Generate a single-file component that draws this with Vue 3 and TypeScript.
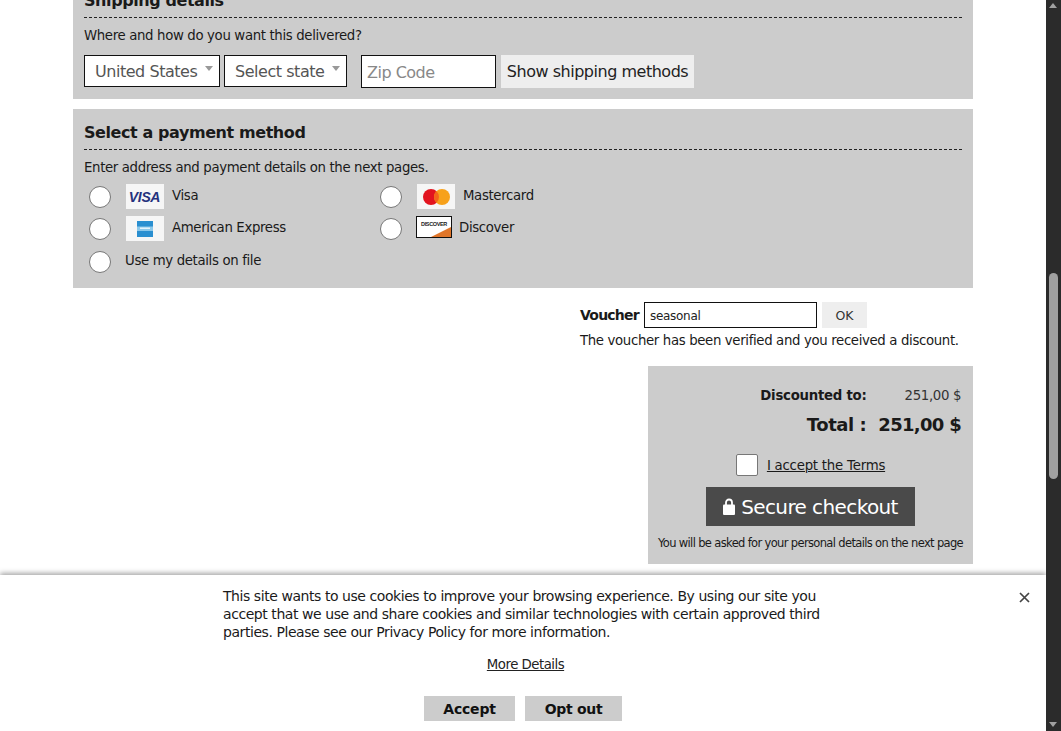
<script setup lang="ts">
const methodsLeft = ['Visa', 'American Express']
</script>

<template>
  <div class="window">
    <div class="page">
      <main class="content">
        <section class="panel shipping">
          <h2>Shipping details</h2>
          <p class="hint">Where and how do you want this delivered?</p>
          <div class="ship-row">
            <div class="fake-select country">United States<i class="caret"></i></div>
            <div class="fake-select state">Select state<i class="caret"></i></div>
            <input class="zip" placeholder="Zip Code" />
            <button class="ship-btn">Show shipping methods</button>
          </div>
        </section>

        <section class="panel payment">
          <h2>Select a payment method</h2>
          <p class="hint">Enter address and payment details on the next pages.</p>
          <div class="methods">
            <label class="method">
              <input type="radio" name="pay" />
              <span class="card">
                <svg width="38" height="25" viewBox="0 0 38 25"><text x="18.500" y="18" text-anchor="middle" class="visa">VISA</text></svg>
              </span>
              <span class="lbl">{{ methodsLeft[0] }}</span>
            </label>
            <label class="method">
              <input type="radio" name="pay" />
              <span class="card">
                <svg width="38" height="25" viewBox="0 0 38 25">
                  <circle cx="14" cy="13" r="8" fill="#e2141f" />
                  <circle cx="25" cy="13" r="8" fill="#f7a11b" />
                  <path d="M19.500 7.200a8 8 0 0 1 0 11.600a8 8 0 0 1 0-11.600z" fill="#f4641a" />
                </svg>
              </span>
              <span class="lbl">Mastercard</span>
            </label>
            <label class="method">
              <input type="radio" name="pay" />
              <span class="card">
                <svg width="38" height="25" viewBox="0 0 38 25">
                  <rect x="11" y="5" width="16" height="16" fill="#2a8fd0" />
                  <rect x="11" y="10.500" width="16" height="4.500" fill="#8cc8ea" />
                  <rect x="14" y="11.500" width="10" height="1.500" fill="#e4f3fb" />
                </svg>
              </span>
              <span class="lbl">{{ methodsLeft[1] }}</span>
            </label>
            <label class="method">
              <input type="radio" name="pay" />
              <span class="disc">
                <svg width="34" height="20" viewBox="0 0 34 20">
                  <path d="M14 20L34 10V20z" fill="#e0762a" />
                  <text x="17" y="9" text-anchor="middle" class="disc-t">DISCOVER</text>
                </svg>
              </span>
              <span class="lbl">Discover</span>
            </label>
            <label class="method file">
              <input type="radio" name="pay" />
              <span class="lbl">Use my details on file</span>
            </label>
          </div>
        </section>

        <section class="voucher">
          <div class="v-row">
            <b>Voucher</b>
            <input class="v-input" value="seasonal" />
            <button class="v-ok">OK</button>
          </div>
          <p class="v-msg">The voucher has been verified and you received a discount.</p>
        </section>

        <section class="summary">
          <div class="sum-row disc-row"><b>Discounted to:</b><span>251,00 $</span></div>
          <div class="sum-row total-row"><b>Total :</b><b>251,00 $</b></div>
          <label class="terms">
            <input type="checkbox" />
            <u>I accept the Terms</u>
          </label>
          <button class="checkout">
            <svg width="12" height="17" viewBox="0 0 12 17">
              <path d="M3 7V4.500a3 3 0 0 1 6 0V7" fill="none" stroke="#fff" stroke-width="1.800" />
              <rect x="0" y="6.500" width="12" height="10.500" rx="1" fill="#fff" />
            </svg>
            Secure checkout
          </button>
          <p class="fine">You will be asked for your personal details on the next page</p>
        </section>
      </main>

      <aside class="cookie">
        <button class="close" aria-label="Close">
          <svg width="11" height="11" viewBox="0 0 11 11"><path d="M1 1l9 9M10 1l-9 9" stroke="#444" stroke-width="1.700" /></svg>
        </button>
        <p class="cookie-text">This site wants to use cookies to improve your browsing experience. By using our site you accept that we use and share cookies and similar technologies with certain approved third parties. Please see our Privacy Policy for more information.</p>
        <a class="more">More Details</a>
        <div class="cookie-btns">
          <button class="accept">Accept</button>
          <button class="opt">Opt out</button>
        </div>
      </aside>
    </div>

    <div class="scrollbar">
      <i class="arrow up"></i>
      <i class="thumb"></i>
      <i class="arrow down"></i>
    </div>
  </div>
</template>

<style>
html, body { margin: 0; overflow: hidden; background: #fff; }
</style>

<style scoped>
* { box-sizing: border-box; }
.window {
  display: flex;
  width: 1061px;
  height: 731px;
  overflow: hidden;
  font-family: "DejaVu Sans", sans-serif;
  font-size: 14px;
  color: #1a1a1a;
}
.page { position: relative; flex: 1; min-width: 0; background: #fff; overflow: hidden; }
.content { width: 900px; margin: -23px auto 0; display: flex; flex-direction: column; }
.panel { background: #ccc; padding: 11px; }
h2 { margin: 0; font-size: 16px; line-height: 26px; border-bottom: 1px dashed #222; height: 30px; letter-spacing: -0.42px; }
.hint { margin: 8px 0 0; line-height: 20px; font-size: 13.300px; letter-spacing: -0.35px; }
.shipping { height: 122px; margin-bottom: 10px; }
.ship-row { display: flex; align-items: flex-start; margin-top: 9px; }
.fake-select {
  position: relative;
  height: 32px;
  background: #fff;
  border: 1px solid #111;
  color: #555;
  font-size: 16px;
  line-height: 31px;
  padding-left: 10px;
  letter-spacing: -0.46px;
}
.country { width: 136px; margin-right: 4px; }
.state { width: 123px; margin-right: 14px; }
.caret { position: absolute; right: 6px; top: 10px; border: 4px solid transparent; border-top: 5px solid #999; border-bottom: 0; }
.zip {
  width: 135px;
  height: 33px;
  border: 1px solid #111;
  font: 16px "DejaVu Sans", sans-serif;
  letter-spacing: -0.5px;
  padding: 2px 5px 0;
  margin-right: 5px;
  background: #fff;
}
.zip::placeholder { color: #888; }
.ship-btn {
  width: 193px;
  height: 33px;
  border: 0;
  padding: 0;
  background: #eee;
  color: #222;
  font: 16px "DejaVu Sans", sans-serif;
  letter-spacing: -0.48px;
}
.payment { height: 179px; }
.methods { display: grid; grid-template-columns: 291px 1fr; grid-auto-rows: 32px; margin: 6px 0 0 5px; }
.method { display: flex; align-items: flex-start; font-size: 13.300px; letter-spacing: -0.35px; }
input[type="radio"] {
  appearance: none;
  width: 22px;
  height: 22px;
  margin: 2px 15px 0 0;
  border: 1px solid #777;
  border-radius: 50%;
  background: #fff;
  flex: none;
}
.card { width: 38px; height: 25px; margin: 0 8px 0 0; background: #f6f6f6; display: block; flex: none; }
.card svg { display: block; }
.visa { font: italic 700 14px "Liberation Sans", sans-serif; fill: #25327d; }
.lbl { line-height: 20px; margin-top: 2px; }
.disc { width: 36px; height: 22px; margin-left: -1px; border: 1px solid #111; background: #fff; margin-right: 7px; display: block; flex: none; }
.disc svg { display: block; }
.disc-t { font: 700 5.500px "Liberation Sans", sans-serif; fill: #222; }
.file { grid-column: 1 / -1; }
.file input[type="radio"] { margin: 3px 14px 0 0; }
.file .lbl { margin-top: 3px; }
.voucher { margin: 14px 0 0 507px; }
.v-row { display: flex; align-items: center; height: 26px; }
.v-row b { font-size: 14px; width: 64px; letter-spacing: -0.77px; }
.v-input { width: 173px; height: 26px; border: 1px solid #111; padding: 1px 5px 0; font: 12px "DejaVu Sans", sans-serif; letter-spacing: -0.3px; color: #222; background: #fff; }
.v-ok { width: 45px; height: 26px; margin-left: 5px; border: 0; background: #eee; color: #333; font: 12.500px "DejaVu Sans", sans-serif; }
.v-msg { margin: 3px 0 0; line-height: 20px; font-size: 13.300px; letter-spacing: -0.35px; white-space: nowrap; }
.summary {
  align-self: flex-end;
  width: 325px;
  height: 198px;
  margin-top: 15px;
  background: #ccc;
  display: flex;
  flex-direction: column;
  align-items: center;
  padding-top: 20px;
}
.sum-row { align-self: stretch; display: flex; justify-content: flex-end; padding-right: 12px; }
.disc-row { font-size: 13.300px; line-height: 20px; }
.disc-row b { margin-right: 38px; letter-spacing: -0.25px; }
.disc-row span { color: #333; letter-spacing: -0.35px; }
.total-row { font-size: 18px; line-height: 24px; margin-top: 7px; letter-spacing: -0.7px; }
.total-row b:first-child { margin-right: 12px; letter-spacing: -0.45px; }
.terms { display: flex; align-items: center; margin-top: 17px; font-size: 13.300px; letter-spacing: -0.22px; }
.terms input { appearance: none; width: 22px; height: 22px; margin: 0 9px 0 0; background: #fff; border: 1px solid #777; border-radius: 2px; }
.checkout {
  width: 209px;
  height: 39px;
  margin-top: 11px;
  border: 0;
  background: #4a4a4a;
  color: #fff;
  font: 20px "DejaVu Sans", sans-serif;
  letter-spacing: -0.6px;
  display: flex;
  align-items: center;
  justify-content: center;
  gap: 6px;
  padding: 0;
}
.fine { margin: 9px 0 0; font-size: 11.500px; line-height: 16px; letter-spacing: -0.65px; white-space: nowrap; }
.cookie {
  position: absolute;
  left: 0;
  right: 0;
  bottom: 0;
  height: 156px;
  background: #fff;
  box-shadow: 0 -2px 5px rgba(0, 0, 0, 0.35);
  display: flex;
  flex-direction: column;
  align-items: center;
  padding-top: 12px;
}
.cookie-text { margin: 0; width: 600px; font-size: 14px; line-height: 18px; letter-spacing: -0.44px; }
.more { margin-top: 15px; margin-left: 5px; font-size: 13.300px; line-height: 18px; text-decoration: underline; letter-spacing: -0.5px; color: #222; }
.cookie-btns { display: flex; gap: 10px; margin-top: 22px; }
.cookie-btns button { height: 25px; border: 0; padding: 0; background: #ccc; color: #111; font: 700 14px "DejaVu Sans", sans-serif; }
.accept { width: 91px; letter-spacing: -0.2px; }
.opt { width: 97px; letter-spacing: -0.3px; }
.close { position: absolute; right: 16px; top: 17px; width: 11px; height: 11px; padding: 0; border: 0; background: none; }
.close svg { display: block; }
.scrollbar {
  width: 15px;
  flex: none;
  background: #2b2b2b;
  position: relative;
}
.thumb { position: absolute; left: 3px; top: 273px; width: 9px; height: 206px; border-radius: 5px; background: #a0a0a0; }
.arrow { position: absolute; left: 3px; border-left: 4.500px solid transparent; border-right: 4.500px solid transparent; }
.up { top: 3px; border-bottom: 5px solid #a0a0a0; }
.down { bottom: 4px; border-top: 5px solid #a0a0a0; }
</style>
